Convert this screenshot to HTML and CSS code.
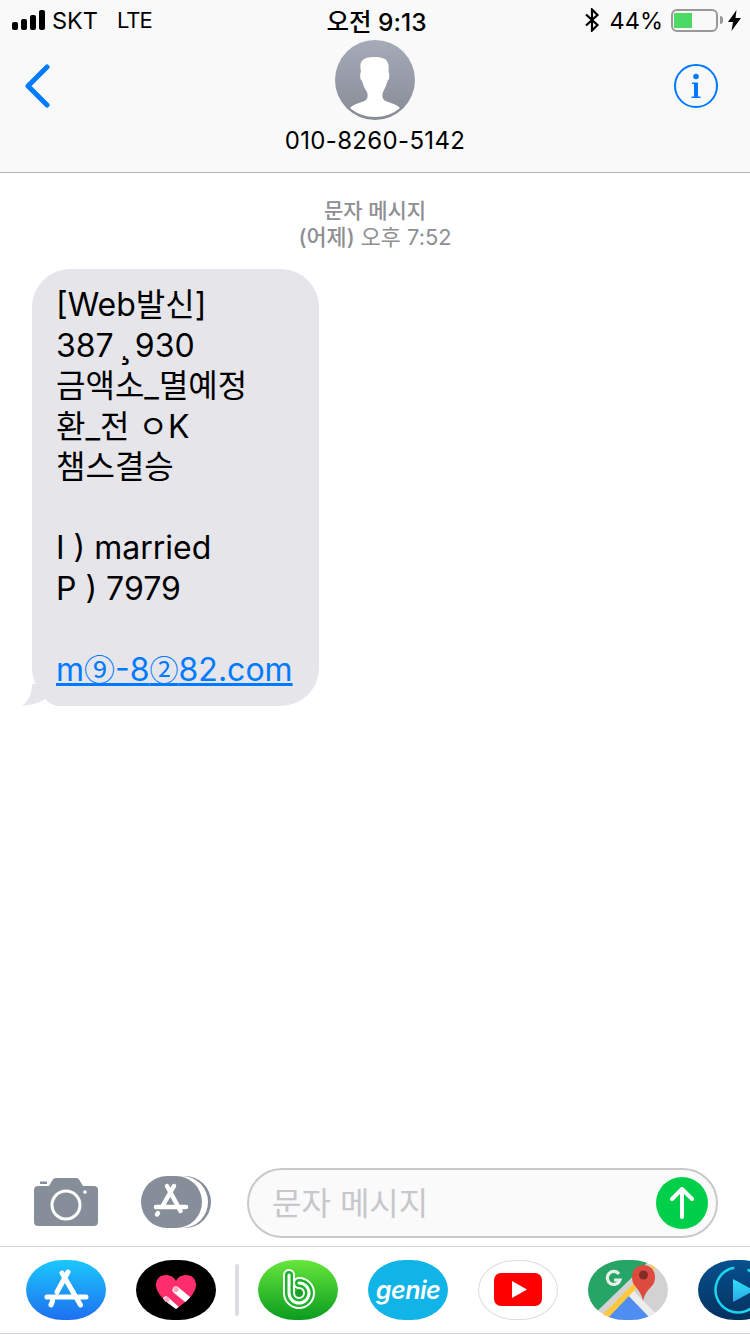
FILE: index.html
```html
<!DOCTYPE html>
<html lang="ko">
<head>
    <meta charset="UTF-8">
    <title>문자 메시지</title>
    <link rel="stylesheet" href="styles.css">
</head>
<body>

<div class="screen">
    <header class="top">
        <div class="status">
            <div class="status-left">
                <span class="signal"><i class="b1"></i><i class="b2"></i><i class="b3"></i><i class="b4"></i></span>
                <span class="carrier">SKT</span>
                <span class="network">LTE</span>
            </div>
            <div class="clock">오전 9:13</div>
            <div class="status-right">
                <svg class="bt" width="16" height="24" viewBox="0 0 16 24"><path d="M2 6.500 13.500 17 8 22.500V1.500L13.500 7 2 17.500" fill="none" stroke="#000" stroke-width="2.200"/></svg>
                <span class="percent">44%</span>
                <span class="battery"><span class="battery-fill"></span></span>
                <span class="battery-nub"></span>
                <svg class="bolt" width="13" height="21" viewBox="0 0 13 21"><path d="M8.500 0 0 12h5L3.500 21 13 8H7.500z" fill="#000"/></svg>
            </div>
        </div>
        <nav class="nav">
            <svg class="back" width="26" height="44" viewBox="0 0 26 44"><path d="M23 3 4 22l19 19" fill="none" stroke="#007aff" stroke-width="5" stroke-linecap="round" stroke-linejoin="round"/></svg>
            <div class="contact">
                <svg class="avatar" width="80" height="80" viewBox="0 0 80 80">
                    <defs>
                        <linearGradient id="av" x1="0" y1="0" x2="0" y2="1"><stop offset="0" stop-color="#a6abb8"/><stop offset="1" stop-color="#868b96"/></linearGradient>
                    </defs>
                    <circle cx="40" cy="40" r="40" fill="url(#av)"/>
                    <path d="M15 68C20 63 27 63 31 60C33 58 33 55 32 52C29 48 28 44 27 41L25.500 39C25 36 25 33 26 32C25 26 25 22 28 20C31 17 36 17 40 17C45 17 50 18 52 21C54 24 54 28 53.500 32C54.500 33 54.500 36 54 39L52.500 41C51.500 45 50 48 48 52C47 55 47 58 49 60C53 63 60 63 65 68C58 74 49 77 40 77C31 77 22 74 15 68Z" fill="#fff"/>
                </svg>
                <div class="phone">010-8260-5142</div>
            </div>
            <svg class="info" width="44" height="44" viewBox="0 0 44 44">
                <circle cx="22" cy="22" r="21" fill="none" stroke="#007aff" stroke-width="2"/>
                <circle cx="22" cy="12.500" r="2.800" fill="#007aff"/>
                <path d="M18 18.500h6v14h2.500V34h-9v-1.500H20V20h-2z" fill="#007aff"/>
            </svg>
        </nav>
    </header>

    <main class="thread">
        <div class="stamp">
            <div class="stamp-kind">문자 메시지</div>
            <div><strong>(어제)</strong> 오후 7:52</div>
        </div>
        <div class="bubble">
            <svg class="tail" width="48" height="22" viewBox="0 0 48 22"><path d="M10 0C10 10 6 18 0 21.700C8 21.500 17 19 23 15C27 19 31 21 36 22H48V0z" fill="#e5e5ea"/></svg>
            <p class="msg">[Web발신]
387<span class="cedilla">¸</span>930
금액소_멸예정
환_전 ㅇK
챔스결승

I ) married
P ) 7979

<a href="#" class="link">m<span class="circled">⑨</span>-8<span class="circled small">②</span>82.com</a></p>
        </div>
    </main>

    <section class="composer">
        <svg class="camera" width="64" height="48" viewBox="0 0 64 48">
            <path d="M4 8h11l3-5c1-2 2-3 4-3h20c2 0 3 1 4 3l3 5h11c2.500 0 4 1.500 4 4v32c0 2.500-1.500 4-4 4H4c-2.500 0-4-1.500-4-4V12c0-2.500 1.500-4 4-4z" fill="#868e99"/>
            <rect x="6" y="3.500" width="7" height="2.500" fill="#868e99"/>
            <circle cx="32" cy="27" r="14" fill="none" stroke="#fff" stroke-width="3"/>
            <circle cx="51" cy="14" r="1.800" fill="#fff"/>
        </svg>
        <svg class="store-btn" width="70" height="52" viewBox="0 0 70 52">
            <rect x="10" y="0" width="60" height="52" rx="26" fill="#868e99"/>
            <rect x="7" y="0" width="60" height="52" rx="26" fill="#fff"/>
            <rect x="0" y="0" width="61" height="52" rx="26" fill="#868e99"/>
            <g fill="none" stroke="#fff" stroke-width="4.500" stroke-linecap="round">
                <path d="M33 10 21 31M17 37l-1 1.500M26 10l13.500 25M15 31h30"/>
            </g>
        </svg>
        <div class="input">
            <span class="placeholder">문자 메시지</span>
            <span class="send">
                <svg width="26" height="32" viewBox="0 0 26 32"><path d="M13 30V3M3 12l10-10 10 10" fill="none" stroke="#fff" stroke-width="4" stroke-linecap="round" stroke-linejoin="round"/></svg>
            </span>
        </div>
    </section>

    <section class="apps">
        <div class="app app-store">
            <svg width="80" height="60" viewBox="0 0 80 60">
                <g fill="none" stroke="#fff" stroke-width="5" stroke-linecap="round">
                    <path d="M42 12 31 32M26.500 41 25 45M36 13l18.500 32M21 37h39"/>
                </g>
            </svg>
        </div>
        <div class="app app-heart">
            <svg width="80" height="60" viewBox="0 0 80 60">
                <defs><clipPath id="hc"><path d="M40 49C30 42 20 34 20 25c0-6 4-10 10-10 4 0 8 2 10 6 2-4 6-6 10-6 6 0 10 4 10 10 0 9-10 17-20 24z"/></clipPath></defs>
                <path d="M40 49C30 42 20 34 20 25c0-6 4-10 10-10 4 0 8 2 10 6 2-4 6-6 10-6 6 0 10 4 10 10 0 9-10 17-20 24z" fill="#ff2d6b"/>
                <g clip-path="url(#hc)">
                    <path d="M40 30 62 48M30 40 50 58" stroke="#fff" stroke-width="7" stroke-linecap="round"/>
                </g>
                <circle cx="40" cy="29.500" r="2.600" fill="#ffa6c0"/>
                <circle cx="31" cy="39.500" r="2.600" fill="#ffa6c0"/>
            </svg>
        </div>
        <span class="apps-sep"></span>
        <div class="app app-band">
            <svg width="80" height="60" viewBox="0 0 80 60">
                <path d="M31 15V33a10 10 0 1 0 10-10" fill="none" stroke="#fff" stroke-width="12" stroke-linecap="round"/>
                <path d="M31 15V33a10 10 0 1 0 10-10" fill="none" stroke="#1bb32c" stroke-width="8" stroke-linecap="round"/>
                <path d="M31 15V33a10 10 0 1 0 10-10" fill="none" stroke="#fff" stroke-width="3" stroke-linecap="round"/>
                <circle cx="41" cy="33" r="3.500" fill="#1a9e2a"/>
            </svg>
        </div>
        <div class="app app-genie"><span class="genie-word">genie</span></div>
        <div class="app app-youtube">
            <svg width="80" height="60" viewBox="0 0 80 60">
                <rect x="16" y="13" width="48" height="33" rx="7" fill="#f00"/>
                <path d="M34 21v17l15-8.500z" fill="#fff"/>
            </svg>
        </div>
        <div class="app app-maps">
            <svg width="80" height="60" viewBox="0 0 80 60">
                <rect width="80" height="60" fill="#d2d2d2"/>
                <path d="M0 0h62L0 60z" fill="#26a567"/>
                <path d="M18 60 40 35l24 25z" fill="#4f8ef0"/>
                <path d="M40 35 45 30l24 25-5 5z" fill="#ededed"/>
                <path d="M12 57 60 9l4 3-46 48z" fill="#fdc73f"/>
                <path d="M58 0h14l-6 10z" fill="#fdc73f"/>
                <path d="M55 41c-1-6-4-10-7-14-3-3-4-6-4-10 0-7 5-12 11.500-12S67 10 67 17c0 4-1 7-4 10-4 4-7 8-8 14z" fill="#dd4b3e"/>
                <circle cx="55.500" cy="15" r="4.500" fill="#802d27"/>
                <path d="M31 14a6.500 6.500 0 1 0 1 6h-6" fill="none" stroke="#e8efe9" stroke-width="3.200"/>
            </svg>
        </div>
        <div class="app app-player">
            <svg width="80" height="60" viewBox="0 0 80 60">
                <defs><linearGradient id="pl" x1="0" y1="0" x2="0" y2="1"><stop offset="0" stop-color="#2fe0f5"/><stop offset="1" stop-color="#2aa9e8"/></linearGradient></defs>
                <circle cx="40" cy="30" r="22.500" fill="none" stroke="#1ad6ee" stroke-width="2.500" stroke-dasharray="127 14" transform="rotate(-65 40 30)"/>
                <path d="M35 19v23l21-11.500z" fill="url(#pl)"/>
            </svg>
        </div>
    </section>
</div>

</body>
</html>
```

FILE: styles.css
```css
* {
    box-sizing: border-box;
}
body {
    margin: 0;
    background: #fff;
    font-family: 'Inter', 'Noto Sans CJK KR', sans-serif;
    color: #000;
}
.screen {
    width: 750px;
    height: 1334px;
    display: flex;
    flex-direction: column;
    overflow: hidden;
}

/* header */
.top {
    height: 173px;
    background: #f9f9f9;
    border-bottom: 1px solid #b2b2b2;
    flex-shrink: 0;
}
.status {
    height: 40px;
    padding: 0 9px 0 12px;
    display: grid;
    grid-template-columns: 1fr auto 1fr;
    align-items: center;
    font-size: 24px;
}
.status-left, .status-right {
    display: flex;
    align-items: center;
}
.status-right {
    justify-content: flex-end;
}
.signal {
    display: flex;
    align-items: flex-end;
    gap: 3px;
    height: 20px;
    margin-right: 7px;
}
.signal i {
    display: block;
    width: 6px;
    background: #000;
    border-radius: 2px;
}
.signal .b1 { height: 8px; }
.signal .b2 { height: 11px; }
.signal .b3 { height: 15px; }
.signal .b4 { height: 20px; }
.carrier {
    font-size: 23.5px;
}
.network {
    margin-left: 19px;
    font-size: 22px;
    letter-spacing: -1px;
}
.clock {
    font-weight: 500;
    font-size: 24.500px;
}
.percent {
    margin-left: 10px;
    margin-right: 8px;
    font-size: 23.500px;
}
.battery {
    width: 47px;
    height: 23px;
    border: 2px solid #999;
    border-radius: 6px;
    padding: 2px 1px;
    display: block;
}
.battery-fill {
    display: block;
    width: 18px;
    height: 100%;
    background: #4cd964;
}
.battery-nub {
    width: 3px;
    height: 8px;
    margin-left: 2px;
    background: #999;
    border-radius: 0 3px 3px 0;
}
.bolt {
    margin-left: 5px;
}
.nav {
    height: 132px;
    padding: 0 32px;
    display: grid;
    grid-template-columns: 1fr auto 1fr;
    align-items: start;
}
.back {
    margin: 24px 0 0 -8px;
}
.info {
    margin-top: 24px;
    justify-self: end;
}
.contact {
    display: flex;
    flex-direction: column;
    align-items: center;
}
.avatar {
    display: block;
}
.phone {
    margin-top: 6px;
    font-size: 24px;
    line-height: 30px;
    letter-spacing: .35px;
}

/* conversation */
.thread {
    flex: 1;
    padding-top: 25px;
}
.stamp {
    text-align: center;
    font-size: 21.800px;
    line-height: 26px;
    color: #8e8e93;
}
.stamp-kind {
    font-size: 21px;
}
.stamp-kind, .stamp strong {
    font-weight: 500;
}
.bubble {
    position: relative;
    width: 287px;
    height: 437px;
    margin: 19px 0 0 32px;
    padding: 16px 0 0 24px;
    background: #e5e5ea;
    border-radius: 38px;
}
.tail {
    position: absolute;
    left: -10px;
    bottom: 0;
}
.msg {
    position: relative;
    margin: 0;
    white-space: pre-line;
    font-size: 32px;
    line-height: 40.500px;
}
.cedilla {
    font-size: 38px;
    line-height: 0;
    margin: 0 5.500px;
}
.link {
    color: #007aff;
}
.circled {
    font-family: 'Noto Sans CJK KR', sans-serif;
    font-size: 31px;
    line-height: 0;
}
.small {
    font-size: 29px;
}

/* input */
.composer {
    height: 78px;
    padding-left: 34px;
    display: flex;
    align-items: flex-start;
    flex-shrink: 0;
}
.camera {
    margin: 10px 43px 0 0;
}
.store-btn {
    margin: 8px 36px 0 0;
}
.input {
    width: 471px;
    height: 70px;
    padding: 0 8px 0 23px;
    background: #fafafa;
    border: 2px solid #c8c8cd;
    border-radius: 35px;
    display: flex;
    align-items: center;
    justify-content: space-between;
}
.placeholder {
    font-size: 32px;
    color: #c7c7cc;
    margin-top: -4px;
}
.send {
    width: 52px;
    height: 52px;
    border-radius: 50%;
    background: #00cf4a;
    display: flex;
    align-items: center;
    justify-content: center;
}

/* app strip */
.apps {
    height: 88px;
    padding-left: 26px;
    border-top: 1px solid #d6d6da;
    border-bottom: 1px solid #d6d6da;
    display: flex;
    align-items: center;
    gap: 30px;
    flex-shrink: 0;
}
.app {
    width: 80px;
    height: 60px;
    flex-shrink: 0;
    border-radius: 37px / 30px;
    overflow: hidden;
    display: flex;
    align-items: center;
    justify-content: center;
}
.app svg {
    display: block;
}
.apps-sep {
    width: 4px;
    height: 52px;
    margin: 0 -11px;
    background: #dcdde3;
    border-radius: 2px;
    flex-shrink: 0;
}
.app-store {
    background: linear-gradient(#1bc8fb, #1e6ff1);
}
.app-heart {
    background: #000;
}
.app-band {
    background: linear-gradient(#66e63c, #0b9c1f);
}
.app-genie {
    background: #10b4e7;
}
.genie-word {
    font-size: 25px;
    font-weight: 600;
    font-style: italic;
    color: #fff;
    letter-spacing: -.5px;
}
.app-youtube {
    background: #fff;
    box-shadow: inset 0 0 0 1px #ddd;
}
.app-player {
    background: linear-gradient(#07508f, #04315f);
}
```
